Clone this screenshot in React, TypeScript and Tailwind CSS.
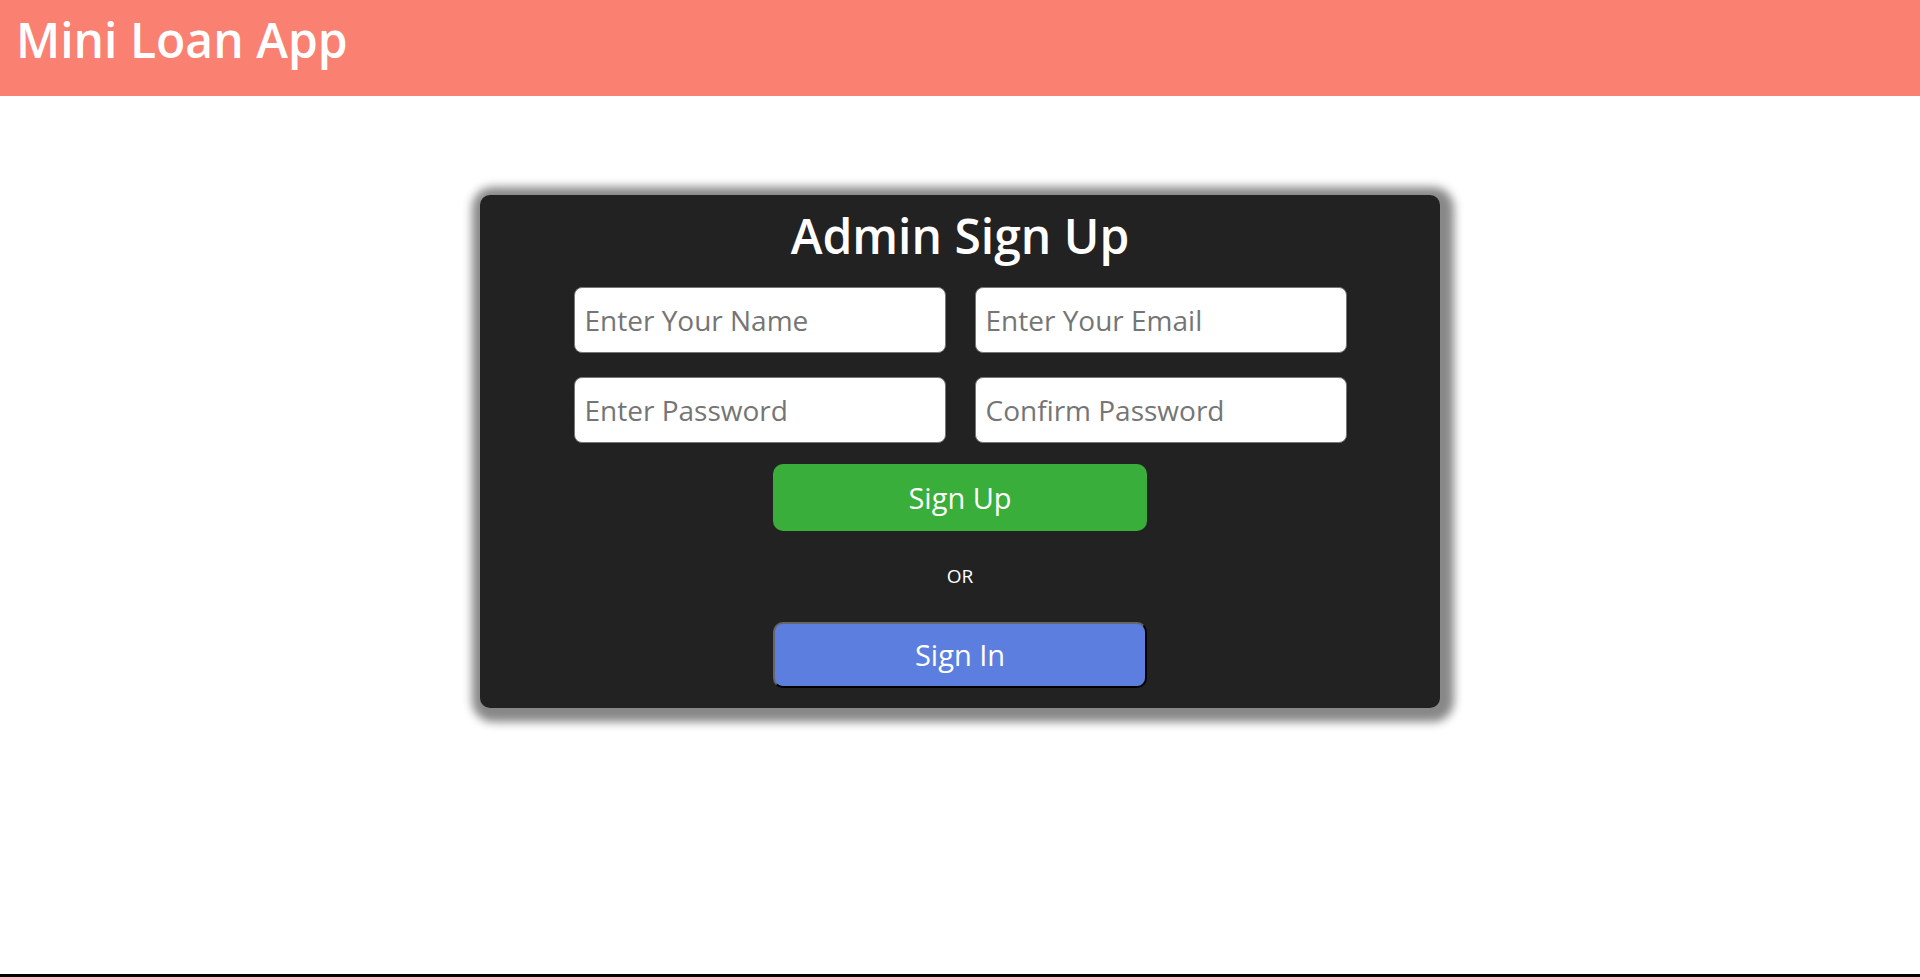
export default function App() {
  const font = { fontFamily: '"Open Sans", "Noto Sans", sans-serif' };
  return (
    <div className="min-h-screen flex flex-col bg-white" style={font}>
      {/* header */}
      <header className="h-[96px] bg-[#fa8072] pl-4 pt-[16px]">
        <h1 className="text-[48px] leading-none font-semibold text-white">Mini Loan App</h1>
      </header>

      <main className="flex-1 flex justify-center pt-[99px]">
        <div className="w-[960px] h-[513px] bg-[#222222] rounded-[10px] shadow-[3px_3px_10px_11px_#888888] pt-[17px] pb-[20px] flex flex-col items-center">
          <h2 className="text-[48px] leading-none font-semibold text-white">Admin Sign Up</h2>

          <div className="grid grid-cols-2 gap-x-[29px] gap-y-[24px] mt-[27px]">
            <input className="w-[372px] h-[66px] bg-white rounded-[8px] border border-[#767676] px-[10px] text-[28px] placeholder:text-[#757575] outline-none" placeholder="Enter Your Name" />
            <input className="w-[372px] h-[66px] bg-white rounded-[8px] border border-[#767676] px-[10px] text-[28px] placeholder:text-[#757575] outline-none" placeholder="Enter Your Email" />
            <input type="password" className="w-[372px] h-[66px] bg-white rounded-[8px] border border-[#767676] px-[10px] text-[28px] placeholder:text-[#757575] outline-none" placeholder="Enter Password" />
            <input type="password" className="w-[372px] h-[66px] bg-white rounded-[8px] border border-[#767676] px-[10px] text-[28px] placeholder:text-[#757575] outline-none" placeholder="Confirm Password" />
          </div>

          <button className="mt-[21px] w-[374px] h-[67px] rounded-[10px] bg-[#39ae3a] text-white text-[29px]">
            Sign Up
          </button>

          <p className="mt-[36px] text-[19px] leading-none text-white">OR</p>

          <button className="mt-[36px] w-[374px] h-[66px] rounded-[10px] bg-[#5c7ede] text-white text-[29px] border-2 border-t-[#666] border-l-[#666] border-r-black border-b-black">
            Sign In
          </button>
        </div>
      </main>

      <div className="h-[3px] bg-black" />
    </div>
  );
}
